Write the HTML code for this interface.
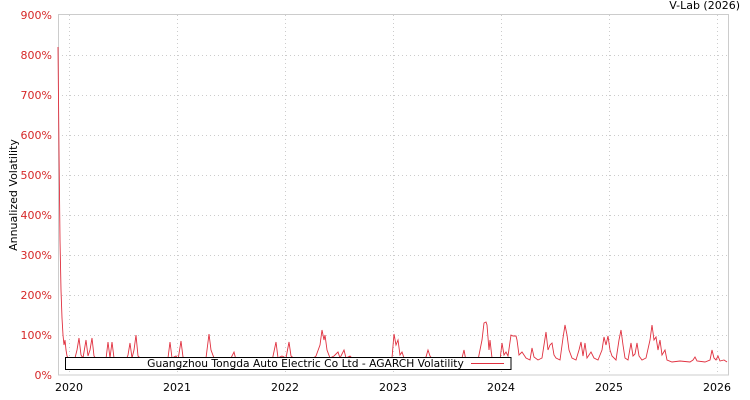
<!DOCTYPE html>
<html><head><meta charset="utf-8"><style>
html,body{margin:0;padding:0;background:#fff;width:750px;height:400px;overflow:hidden}
svg text{font-family:"DejaVu Sans","Liberation Sans",sans-serif;font-size:11px}
svg text.lg{font-size:10.7px}
</style></head><body>
<svg width="750" height="400" viewBox="0 0 750 400" xmlns="http://www.w3.org/2000/svg">
<rect x="0" y="0" width="750" height="400" fill="#fff"/>
<g stroke="#ccc" stroke-width="1" stroke-dasharray="1,3" fill="none">
<line x1="58" y1="55.5" x2="728" y2="55.5"/><line x1="58" y1="95.5" x2="728" y2="95.5"/>
<line x1="58" y1="135.5" x2="728" y2="135.5"/><line x1="58" y1="175.5" x2="728" y2="175.5"/>
<line x1="58" y1="215.5" x2="728" y2="215.5"/><line x1="58" y1="255.5" x2="728" y2="255.5"/>
<line x1="58" y1="295.5" x2="728" y2="295.5"/><line x1="58" y1="335.5" x2="728" y2="335.5"/>
<line x1="69.5" y1="15" x2="69.5" y2="375"/><line x1="177.5" y1="15" x2="177.5" y2="375"/>
<line x1="285.5" y1="15" x2="285.5" y2="375"/><line x1="393.5" y1="15" x2="393.5" y2="375"/>
<line x1="501.5" y1="15" x2="501.5" y2="375"/><line x1="609.5" y1="15" x2="609.5" y2="375"/>
<line x1="717.5" y1="15" x2="717.5" y2="375"/>
</g>
<rect x="58.5" y="14.5" width="670" height="360.5" fill="none" stroke="#ccc"/>
<polyline fill="none" stroke="#e0303f" stroke-width="0.9" points="58,47 59,150 60,240 61,290 62,318 63,335 64,345 65,340 66,350 67,356 69,360 72,358 74,362 77,350 79,338 81,355 83,358 86,340 88,356 90,350 92,338 94,356 97,360 100,358 103,361 106,359 108,342 110,358 112,342 114,358 118,361 122,359 126,360 128,355 130,343 132,358 134,350 136,335 138,356 142,360 150,361 160,360 168,358 170,342 172,358 176,356 178,360 181,341 183,357 188,361 200,360 206,358 209,334 211,350 214,358 220,361 230,360 234,352 236,360 250,361 262,360 268,358 272,361 276,342 278,358 282,356 286,358 289,342 291,356 296,360 304,358 310,361 316,356 320,345 322,330 324,340 325,335 327,350 330,358 334,356 338,352 340,358 344,350 346,358 350,356 355,361 368,360 372,358 376,361 388,360 392,358 394,334 396,345 398,340 400,355 402,352 404,358 410,361 420,360 426,357 428,350 430,356 434,361 448,360 458,360 462,358 464,350 466,361 478,360 482,340 484,323 486,322 487,325 489,350 490,340 492,358 495,361 500,360 502,343 504,355 506,352 508,356 511,335 513,336 516,336 517,340 519,355 522,352 526,358 530,360 532,348 534,357 538,360 542,358 546,332 548,350 550,345 552,343 554,355 556,358 560,360 563,338 565,325 567,335 569,350 572,358 576,360 579,350 581,342 583,356 585,343 587,358 591,352 594,358 598,360 602,350 604,337 606,345 608,336 610,350 612,356 616,360 619,340 621,330 623,345 625,358 628,360 631,343 633,356 635,354 637,343 639,356 642,360 646,358 650,340 652,325 654,340 656,337 658,350 660,340 662,355 665,350 667,360 672,362 680,361 690,362 693,360 695,357 697,361 705,362 710,360 712,350 714,358 716,360 718,356 720,361 724,360 727,362"/>
<rect x="65.5" y="357.5" width="445.5" height="12" fill="#fff" stroke="#000" stroke-width="1"/>
<text class="lg" x="305.5" y="367" text-anchor="middle" fill="#000">Guangzhou Tongda Auto Electric Co Ltd - AGARCH Volatility</text>
<line x1="471" y1="363.5" x2="504" y2="363.5" stroke="#e0303f" stroke-width="1"/>
<g fill="#d62728" text-anchor="end">
<text x="52" y="19">900%</text><text x="52" y="59">800%</text><text x="52" y="99">700%</text>
<text x="52" y="139">600%</text><text x="52" y="179">500%</text><text x="52" y="219">400%</text>
<text x="52" y="259">300%</text><text x="52" y="299">200%</text><text x="52" y="339">100%</text>
<text x="52" y="379">0%</text>
</g>
<g fill="#000" text-anchor="middle">
<text x="69" y="391">2020</text><text x="177" y="391">2021</text><text x="285" y="391">2022</text>
<text x="393" y="391">2023</text><text x="501" y="391">2024</text><text x="609" y="391">2025</text>
<text x="717" y="391">2026</text>
</g>
<text x="740" y="9" text-anchor="end" fill="#000">V-Lab (2026)</text>
<text transform="translate(17,195) rotate(-90)" text-anchor="middle" fill="#000">Annualized Volatility</text>
</svg>
</body></html>
